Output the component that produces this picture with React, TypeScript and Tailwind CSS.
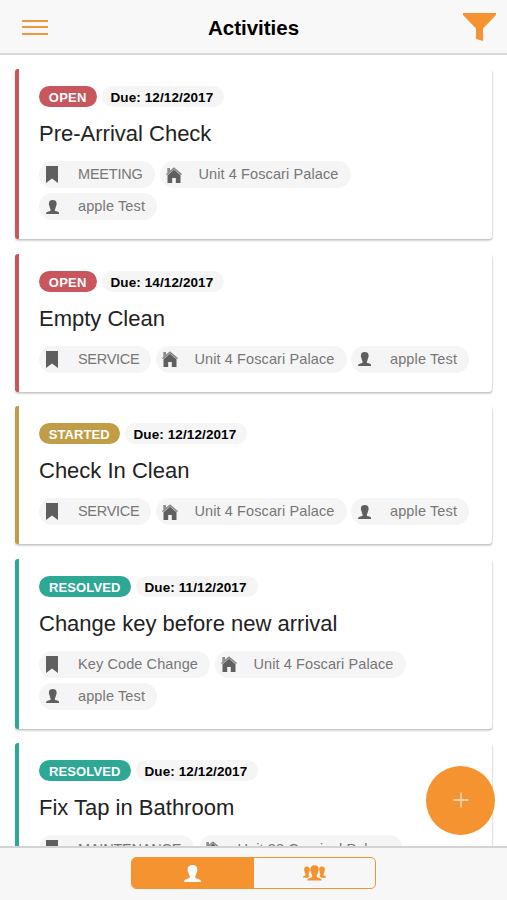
import React from 'react';
import clsx from 'clsx';

type Status = 'OPEN' | 'STARTED' | 'RESOLVED';
type IconName = 'bookmark' | 'home' | 'person';

interface Tag {
  icon: IconName;
  label: string;
  // label box width and letter spacing
  fit: string;
}

interface Activity {
  status: Status;
  due: string;
  title: string;
  height: string;
  tags: Tag[];
}

const unit: Tag = { icon: 'home', label: 'Unit 4 Foscari Palace', fit: 'w-[140px] tracking-[0.1px]' };
const apple: Tag = { icon: 'person', label: 'apple Test', fit: 'w-[67px] tracking-[0.12px]' };
const service: Tag = { icon: 'bookmark', label: 'SERVICE', fit: 'w-[61px] tracking-[-0.3px]' };

const activities: Activity[] = [
  {
    status: 'OPEN',
    due: '12/12/2017',
    title: 'Pre-Arrival Check',
    height: 'h-[170px]',
    tags: [{ icon: 'bookmark', label: 'MEETING', fit: 'w-[65px] tracking-[-0.2px]' }, unit, apple],
  },
  {
    status: 'OPEN',
    due: '14/12/2017',
    title: 'Empty Clean',
    height: 'h-[138px]',
    tags: [service, unit, apple],
  },
  {
    status: 'STARTED',
    due: '12/12/2017',
    title: 'Check In Clean',
    height: 'h-[138px]',
    tags: [service, unit, apple],
  },
  {
    status: 'RESOLVED',
    due: '11/12/2017',
    title: 'Change key before new arrival',
    height: 'h-[170px]',
    tags: [{ icon: 'bookmark', label: 'Key Code Change', fit: 'w-[120px] tracking-[0.1px]' }, unit, apple],
  },
  {
    status: 'RESOLVED',
    due: '12/12/2017',
    title: 'Fix Tap in Bathroom',
    height: 'h-[170px]',
    tags: [
      { icon: 'bookmark', label: 'MAINTENANCE', fit: 'w-[104px] tracking-[-0.2px]' },
      { icon: 'home', label: 'Unit 28 Carnival Palace', fit: 'w-[153px] tracking-[0.1px]' },
    ],
  },
];

const statusBg: Record<Status, string> = {
  OPEN: 'bg-[#c9565c] w-[57.5px]',
  STARTED: 'bg-[#c19d48] w-[80.5px]',
  RESOLVED: 'bg-[#2ea794] w-[91.5px]',
};

const statusFit: Record<Status, string> = {
  OPEN: 'tracking-[0.3px]',
  STARTED: 'tracking-[0.1px]',
  RESOLVED: 'tracking-[0.1px]',
};

const statusBorder: Record<Status, string> = {
  OPEN: 'border-l-[#c9565c]',
  STARTED: 'border-l-[#c19d48]',
  RESOLVED: 'border-l-[#2ea794]',
};

const personPath =
  'M25 0C34 0 40 5 39 13C40 16 39 20 37 22C36 28 34 31 33 34C32.5 38 34 39 39 40.5C46 42.500 50 44 50 50H0C0 44 4 42.500 11 40.500C16 39 17.500 38 17 34C16 31 14 28 13 22C11 20 10 16 11 13C10 5 16 0 25 0z';

const PersonIcon = ({ className }: { className: string }) => (
  <svg viewBox="0 0 50 50" preserveAspectRatio="none" className={className} fill="currentColor">
    <path d={personPath} />
  </svg>
);

const PeopleIcon = () => (
  <svg viewBox="0 0 23 16" className="h-4 w-[23px]" fill="currentColor">
    <g transform="translate(-1 1.600) scale(.2 .225)">
      <path d="M25 0C34 0 40 5 39 13C40 16 39 20 37 22C36 28 34 31 33 34C33 38 36 40 38 42L30 50H5C5 44 7 42.500 14 40.500C18 39 18 38 17 34C16 31 14 28 13 22C11 20 10 16 11 13C10 5 16 0 25 0z" />
    </g>
    <g transform="translate(24 1.600) scale(-.2 .225)">
      <path d="M25 0C34 0 40 5 39 13C40 16 39 20 37 22C36 28 34 31 33 34C33 38 36 40 38 42L30 50H5C5 44 7 42.500 14 40.500C18 39 18 38 17 34C16 31 14 28 13 22C11 20 10 16 11 13C10 5 16 0 25 0z" />
    </g>
    <g transform="translate(4.250 .300) scale(.29 .306)" stroke="#f7f7f7" strokeWidth="3.5" paintOrder="stroke">
      <path d={personPath} />
    </g>
  </svg>
);

const TagIcon = ({ name }: { name: IconName }) => {
  if (name === 'bookmark') {
    return (
      <svg viewBox="0 0 12 17" className="ml-[7px] h-[17px] w-3" fill="currentColor">
        <path d="M0 0h12v17l-6-4.600L0 17z" />
      </svg>
    );
  }
  if (name === 'home') {
    return (
      <svg viewBox="0 0 16 16" className="ml-[6px] h-4 w-4" fill="currentColor">
        <path d="M8 2.800L14.500 8.200V16H9.800v-5H6.200v5H1.500V8.200z" />
        <path d="M1.300 1H4v2.500L8 .2l8 6.900-.9 1.200L8 2.400.9 8.300 0 7.100l1.300-1.200z" opacity=".7" />
      </svg>
    );
  }
  return <PersonIcon className="ml-[6.5px] h-[14px] w-[13.5px]" />;
};

const ActivityCard = ({ activity }: { activity: Activity }) => (
  <article
    className={clsx(
      'shrink-0 rounded-[3px] border-l-4 bg-white pt-[17px] pr-[22px] pl-5 shadow-[0_2px_2px_rgba(0,0,0,0.16),1px_1px_1px_rgba(0,0,0,0.08),0_0_1px_rgba(0,0,0,0.05)]',
      statusBorder[activity.status],
      activity.height
    )}
  >
    <div className="flex h-[21px] gap-[5px] text-[13.5px] font-bold leading-[23px]">
      <span className={clsx('rounded-full text-center text-[13px] text-white', statusBg[activity.status], statusFit[activity.status])}>
        {activity.status}
      </span>
      <span className="w-[122px] rounded-full bg-[#f5f5f5] pl-[9px] tracking-[0.1px] whitespace-nowrap text-black">
        Due: {activity.due}
      </span>
    </div>
    <h2 className="mt-[13px] h-[41px] text-[22px] leading-7 text-[#222]">{activity.title}</h2>
    <div className="flex flex-wrap gap-x-[4.5px] gap-y-[5px]">
      {activity.tags.map((tag) => (
        <span key={tag.label} className="flex h-[27px] items-center rounded-full bg-[#f5f5f5] pr-3 text-[14.5px] text-[#5f5f5f]">
          <span className="w-[39px]">
            <TagIcon name={tag.icon} />
          </span>
          <span className={clsx('pt-px whitespace-nowrap text-[#777]', tag.fit)}>{tag.label}</span>
        </span>
      ))}
    </div>
  </article>
);

const App: React.FC = () => (
  <div className="relative flex h-[900px] w-full flex-col overflow-hidden bg-white font-['Liberation_Sans',Arial,sans-serif]">
    <header className="flex h-[55px] shrink-0 items-center justify-between border-b-2 border-[#d8d8d8] bg-[#f8f8f8] pr-[11px] pl-[22px]">
      <button className="flex w-[33px] flex-col gap-[4.5px] pt-px" aria-label="Menu">
        <span className="h-[2px] w-[26px] bg-[#ef983e]" />
        <span className="h-[2px] w-[26px] bg-[#ef983e]" />
        <span className="h-[2px] w-[26px] bg-[#ef983e]" />
      </button>
      <h1 className="mt-[3px] mr-[11px] text-[20.5px] leading-6 font-bold text-black">Activities</h1>
      <svg viewBox="0 0 33 28" className="h-7 w-[33px]" fill="#f59331">
        <path d="M0 0h33v2L20 15.500V28l-7-2V15.500L0 2z" />
      </svg>
    </header>

    <main className="flex min-h-0 flex-1 flex-col gap-[14.6px] overflow-hidden px-[15px] pt-[14px]">
      {activities.map((activity, i) => (
        <ActivityCard key={i} activity={activity} />
      ))}
    </main>

    <footer className="flex h-[54px] shrink-0 justify-center border-t-2 border-[#d3d3d3] bg-[#f7f7f7] pt-[9px]">
      <div className="flex h-8 w-[245px] overflow-hidden rounded-[5px] border-[1.5px] border-[#f59331]">
        <button className="flex w-1/2 items-center justify-center bg-[#f59331] text-white" aria-label="Mine">
          <PersonIcon className="h-[17px] w-[17px]" />
        </button>
        <button className="flex w-1/2 items-center justify-center text-[#f59331]" aria-label="Team">
          <PeopleIcon />
        </button>
      </div>
    </footer>

    <button className="absolute top-[765.5px] left-[426px] flex size-[69px] items-center justify-center rounded-full bg-[#f59331]" aria-label="Add">
      <svg viewBox="0 0 16 16" className="size-4" stroke="#fde3c8" strokeWidth="1.3">
        <path d="M8 .5v15M.5 8h15" />
      </svg>
    </button>
  </div>
);

export default App;
